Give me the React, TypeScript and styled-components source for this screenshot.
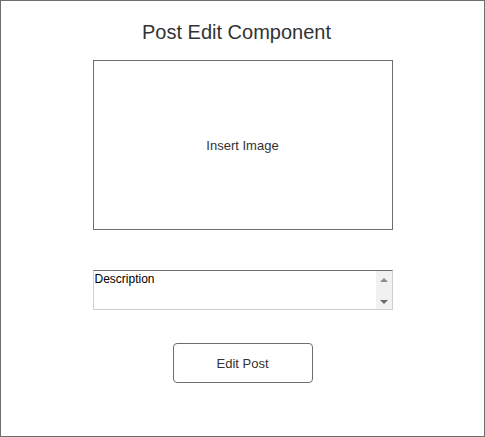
import React from "react";
import styled, { createGlobalStyle } from "styled-components";

const Global = createGlobalStyle`
  html, body { margin: 0; padding: 0; background: #ffffff; }
  body { font-family: "Liberation Sans", Arial, Helvetica, sans-serif; }
`;

const Frame = styled.div`
  width: 485px;
  height: 437px;
  box-sizing: border-box;
  border: 1px solid #6e6e6e;
  display: flex;
  flex-direction: column;
  align-items: center;
  background: #fff;
`;

const Title = styled.h1`
  margin: 20px 12px 0 0;
  font-size: 20px;
  line-height: 23px;
  font-weight: normal;
  color: #333333;
`;

const ImageBox = styled.div`
  margin-top: 16px;
  width: 300px;
  height: 170px;
  box-sizing: border-box;
  border: 1px solid #6e6e6e;
  display: flex;
  align-items: center;
  justify-content: center;
  font-size: 13px;
  color: #333333;
  padding-top: 1px;
`;

const DescBox = styled.div`
  margin-top: 40px;
  width: 300px;
  height: 40px;
  box-sizing: border-box;
  border: 1px solid #cfcfcf;
  border-top-color: #6e6e6e;
  display: flex;
`;

const DescText = styled.div`
  flex: 1;
  padding: 1px 0 0 1px;
  font-size: 12px;
  line-height: 14px;
  color: #000;
`;

const ScrollBar = styled.div`
  width: 16px;
  background: #f1f1f1;
  display: flex;
  flex-direction: column;
  align-items: center;
  justify-content: space-between;
  padding: 7px 0 5px;
`;

const Arrow = styled.div<{ $down?: boolean }>`
  width: 0;
  height: 0;
  border-left: 4px solid transparent;
  border-right: 4px solid transparent;
  ${(p) =>
    p.$down
      ? "border-top: 4px solid #6a6a6a;"
      : "border-bottom: 4px solid #8a8a8a;"}
`;

const Button = styled.button`
  margin-top: 33px;
  width: 140px;
  height: 40px;
  box-sizing: border-box;
  border: 1px solid #6e6e6e;
  border-radius: 4px;
  background: #fff;
  font-family: "Liberation Sans", Arial, Helvetica, sans-serif;
  font-size: 13px;
  color: #333333;
  padding: 0;
  cursor: pointer;
`;

export default function App() {
  return (
    <>
      <Global />
      <Frame>
        <Title>Post Edit Component</Title>
        <ImageBox>Insert Image</ImageBox>
        <DescBox>
          <DescText>Description</DescText>
          <ScrollBar>
            <Arrow />
            <Arrow $down />
          </ScrollBar>
        </DescBox>
        <Button>Edit Post</Button>
      </Frame>
    </>
  );
}
